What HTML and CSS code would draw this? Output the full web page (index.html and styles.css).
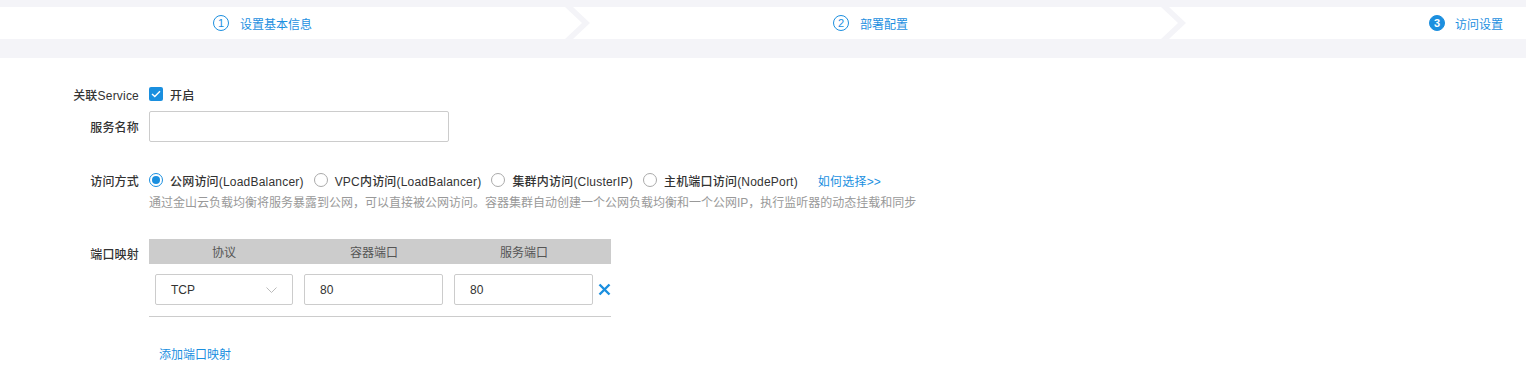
FILE: index.html
```html
<!DOCTYPE html>
<html lang="zh-CN">
<head>
    <meta charset="UTF-8">
    <title>访问设置</title>
    <link rel="stylesheet" href="styles.css">
</head>
<body>
    <div class="steps">
        <div class="step step-first">
            <span class="step-num">1</span>
            <span class="step-text">设置基本信息</span>
        </div>
        <div class="step step-mid">
            <span class="step-num">2</span>
            <span class="step-text">部署配置</span>
        </div>
        <div class="step step-last">
            <span class="step-num active">3</span>
            <span class="step-text">访问设置</span>
        </div>
    </div>

    <div class="form">
        <div class="row row-service">
            <label class="label">关联Service</label>
            <span class="checkbox">
                <svg width="10" height="8" viewBox="0 0 10 8"><path d="M1 4 L3.8 6.6 L9 1.2" fill="none" stroke="#fff" stroke-width="1.4"/></svg>
            </span>
            <span class="option-text">开启</span>
        </div>

        <div class="row row-name">
            <label class="label" for="svc_name">服务名称</label>
            <input type="text" id="svc_name" class="text-input">
        </div>

        <div class="row row-access">
            <label class="label">访问方式</label>
            <div class="options">
                <span class="option"><span class="radio checked"></span><span class="option-text">公网访问(LoadBalancer)</span></span>
                <span class="option"><span class="radio"></span><span class="option-text">VPC内访问(LoadBalancer)</span></span>
                <span class="option"><span class="radio"></span><span class="option-text">集群内访问(ClusterIP)</span></span>
                <span class="option"><span class="radio"></span><span class="option-text">主机端口访问(NodePort)</span></span>
                <a class="link help-link">如何选择&gt;&gt;</a>
            </div>
        </div>
        <div class="hint">通过金山云负载均衡将服务暴露到公网，可以直接被公网访问。容器集群自动创建一个公网负载均衡和一个公网IP，执行监听器的动态挂载和同步</div>

        <div class="row row-ports">
            <label class="label">端口映射</label>
            <div class="port-table">
                <div class="port-head">
                    <span>协议</span>
                    <span>容器端口</span>
                    <span>服务端口</span>
                </div>
                <div class="port-row">
                    <div class="select">
                        <span>TCP</span>
                        <svg width="11" height="6" viewBox="0 0 11 6"><path d="M0.5 0.5 L5.5 5.5 L10.5 0.5" fill="none" stroke="#bbb" stroke-width="1"/></svg>
                    </div>
                    <input type="text" class="port-input" value="80">
                    <input type="text" class="port-input" value="80">
                    <svg class="remove" width="13" height="13" viewBox="0 0 13 13"><path d="M1.5 1.5 L11.5 11.5 M11.5 1.5 L1.5 11.5" stroke="#1a8fdf" stroke-width="2.4"/></svg>
                </div>
            </div>
        </div>

        <a class="link add-link">添加端口映射</a>
    </div>
</body>
</html>
```

FILE: styles.css
```css
body {
    margin: 0;
    background: #fff;
    font-family: "Liberation Sans", "Noto Sans CJK SC", sans-serif;
    font-size: 12px;
    color: #333;
}

/* step bar */
.steps {
    display: flex;
    background: #f4f4f8;
    padding: 7px 0 19px;
}
.step {
    height: 32px;
    background: #fff;
    display: flex;
    align-items: center;
    color: #1c8fdf;
}
.step-first {
    width: 582px;
    padding-left: 213px;
    box-sizing: border-box;
    clip-path: polygon(0 0, calc(100% - 17px) 0, 100% 50%, calc(100% - 17px) 100%, 0 100%);
}
.step-mid {
    width: 605px;
    margin-left: -9px;
    padding-left: 260px;
    box-sizing: border-box;
    clip-path: polygon(0 0, calc(100% - 17px) 0, 100% 50%, calc(100% - 17px) 100%, 0 100%, 17px 50%);
}
.step-last {
    flex: 1;
    margin-left: -9px;
    padding-left: 260px;
    clip-path: polygon(0 0, 100% 0, 100% 100%, 0 100%, 17px 50%);
}
.step-num {
    width: 14px;
    height: 14px;
    border: 1px solid #1c8fdf;
    border-radius: 50%;
    display: flex;
    align-items: center;
    justify-content: center;
    font-size: 11px;
    margin-right: 11px;
}
.step-num.active {
    background: #1c8fdf;
    color: #fff;
    font-weight: bold;
    margin-right: 10px;
}

/* form */
.form {
    padding-top: 29px;
}
.row {
    display: flex;
    align-items: center;
}
.label {
    width: 139px;
    margin-right: 10px;
    text-align: right;
    flex-shrink: 0;
    font-weight: 500;
    color: #333;
    letter-spacing: 0.2px;
}
.row-service {
    height: 14px;
}
.checkbox {
    width: 14px;
    height: 14px;
    border-radius: 2px;
    background: #1a8fdf;
    display: flex;
    align-items: center;
    justify-content: center;
    margin-right: 7px;
}
.option-text {
    font-weight: 500;
    color: #333;
    letter-spacing: 0.2px;
}
.row-name {
    margin-top: 10px;
}
.text-input {
    width: 300px;
    height: 31px;
    box-sizing: border-box;
    border: 1px solid #ccc;
    border-radius: 2px;
    padding: 0 10px;
    font-size: 12px;
}
.row-access {
    margin-top: 31px;
    height: 14px;
}
.options {
    display: flex;
    align-items: center;
}
.option {
    display: flex;
    align-items: center;
    margin-right: 10px;
}
.radio {
    width: 12px;
    height: 12px;
    border: 1px solid #aaa;
    border-radius: 50%;
    margin-right: 7px;
    position: relative;
}
.radio.checked {
    border-color: #1a8fdf;
}
.radio.checked::after {
    content: "";
    position: absolute;
    left: 2px;
    top: 2px;
    width: 8px;
    height: 8px;
    border-radius: 50%;
    background: #1a8fdf;
}
.link {
    color: #1a8fdf;
    cursor: pointer;
}
.help-link {
    margin-left: 10px;
    letter-spacing: 0.2px;
}
.hint {
    margin: 7px 0 0 149px;
    line-height: 18px;
    color: #999;
}

/* port mapping */
.row-ports {
    margin-top: 27px;
    align-items: flex-start;
}
.row-ports .label {
    margin-top: 6px;
}
.port-table {
    width: 462px;
    border-bottom: 1px solid #ccc;
}
.port-head {
    display: flex;
    height: 25px;
    align-items: center;
    background: #ccc;
    color: #555;
}
.port-head span {
    width: 150px;
    text-align: center;
}
.port-row {
    display: flex;
    align-items: center;
    padding: 10px 0 11px 6px;
}
.select {
    width: 138px;
    height: 31px;
    box-sizing: border-box;
    border: 1px solid #ccc;
    border-radius: 2px;
    display: flex;
    align-items: center;
    justify-content: space-between;
    padding: 0 15px 0 15px;
}
.port-input {
    width: 139px;
    height: 31px;
    box-sizing: border-box;
    border: 1px solid #ccc;
    border-radius: 2px;
    margin-left: 11px;
    padding: 0 15px;
    font-family: "Liberation Sans", "Noto Sans CJK SC", sans-serif;
    font-size: 12px;
    color: #333;
}
.remove {
    margin-left: 5px;
}
.add-link {
    display: block;
    margin: 29px 0 0 159px;
    line-height: 18px;
}
```
